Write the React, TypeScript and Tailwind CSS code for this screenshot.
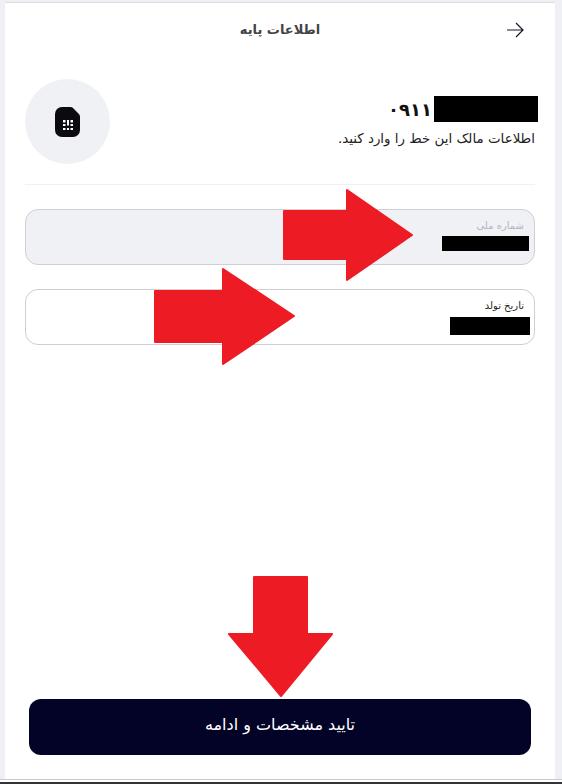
const font = { fontFamily: '"DejaVu Sans", sans-serif' }

function SimIcon() {
    return (
        <svg width="26" height="30" viewBox="0 0 26 30">
            <path d="M7 0H15.5C16.5 0 17.3 .4 18 1.1L23.9 7C24.6 7.700 25 8.500 25 9.500V23A7 7 0 0 1 18 30H7A7 7 0 0 1 0 23V7A7 7 0 0 1 7 0Z" fill="#0a0a0f" />
            <g fill="#fff">
                <rect x="8" y="13" width="2.500" height="2.500" />
                <rect x="15.500" y="13" width="2.500" height="2.500" />
                <rect x="12" y="13" width="2" height="5.500" />
                <rect x="8" y="17" width="2.500" height="2" />
                <rect x="15.500" y="17" width="2.500" height="2" />
                <rect x="8" y="21" width="2.500" height="2" />
                <rect x="12" y="21" width="2" height="2" />
                <rect x="15.500" y="21" width="2.500" height="2" />
            </g>
        </svg>
    )
}

function Field({ label, labelClass, bg, maskClass }: { label: string; labelClass: string; bg: string; maskClass: string }) {
    return (
        <div className={`h-[56px] rounded-[13px] border border-[#cfcfd3] ${bg} flex flex-col items-start pt-[9px]`}>
            <span className={`text-[10px] leading-[14px] pr-[10px] ${labelClass}`}>{label}</span>
            <div className={`bg-black ${maskClass}`} />
        </div>
    )
}

function RedArrow({ className, width, height, points }: { className: string; width: number; height: number; points: string }) {
    return (
        <svg className={`absolute ${className}`} width={width} height={height} viewBox={`0 0 ${width} ${height}`}>
            <polygon points={points} fill="#ed1c24" stroke="#ed1c24" strokeWidth="2" strokeLinejoin="round" />
        </svg>
    )
}

export default function App() {
    return (
        <div dir="rtl" style={font} className="relative h-[784px] w-[562px] overflow-hidden bg-[#eef0f5] pt-[2px] text-[#111]">
            <div className="mr-[7px] ml-[5px] flex h-[777px] flex-col border-t border-[#dcdde1] bg-white px-[20px]">
                <header dir="ltr" className="relative flex h-[51px] shrink-0 items-center justify-center">
                    <svg className="absolute right-[11px] top-[19px]" width="18" height="16" viewBox="0 0 18 16" fill="none" stroke="#16172b" strokeWidth="1.2">
                        <path d="M1 8H17M10 1L17 8L10 15" />
                    </svg>
                    <h1 dir="rtl" className="pt-[3px] text-[13px] font-bold text-[#444]">اطلاعات پایه</h1>
                </header>

                <section className="mt-[25px] flex h-[85px] shrink-0 items-start justify-between">
                    <div className="pt-[17px]">
                        <div dir="ltr" className="mr-[-3px] flex h-[26px] items-center justify-end gap-[2px]">
                            <span className="text-[18px] font-bold">۰۹۱۱</span>
                            <div className="h-[26px] w-[104px] bg-black" />
                        </div>
                        <p className="mt-[8px] text-[13.4px] leading-[18px] text-[#222]">اطلاعات مالک این خط را وارد کنید.</p>
                    </div>
                    <div className="flex h-[85px] w-[85px] items-center justify-center rounded-full bg-[#f0f1f5]">
                        <SimIcon />
                    </div>
                </section>

                <div className="mt-[20px] h-px shrink-0 bg-[#f0f0f2]" />

                <div className="mt-[24px] flex flex-col gap-[24px]">
                    <Field label="شماره ملی" labelClass="text-[#b5b6bc]" bg="bg-[#f0f1f5]" maskClass="mt-[3px] mr-[5px] h-[15px] w-[87px]" />
                    <Field label="تاریخ تولد" labelClass="text-[#222]" bg="bg-white" maskClass="mt-[4px] mr-[4px] h-[18px] w-[80px]" />
                </div>

                <button className="mx-[4px] mt-auto mb-[24px] h-[56px] shrink-0 rounded-[12px] bg-[#020326] pb-[4px] text-[16px] text-white">
                    تایید مشخصات و ادامه
                </button>
            </div>
            <div className="absolute inset-x-0 bottom-0 h-[5px] border-t border-b-2 border-t-[#c9c9cc] border-b-[#333] bg-white" />

            <RedArrow className="left-[282px] top-[188px]" width={133} height={94} points="2,23 65,23 65,2 130,47 65,92 65,71 2,71" />
            <RedArrow className="left-[153px] top-[267px]" width={144} height={99} points="2,24 70,24 70,2 141,49 70,97 70,75 2,75" />
            <RedArrow className="left-[227px] top-[575px]" width={107} height={123} points="27,2 80,2 80,59 105,59 54,121 2,59 27,59" />
        </div>
    )
}
